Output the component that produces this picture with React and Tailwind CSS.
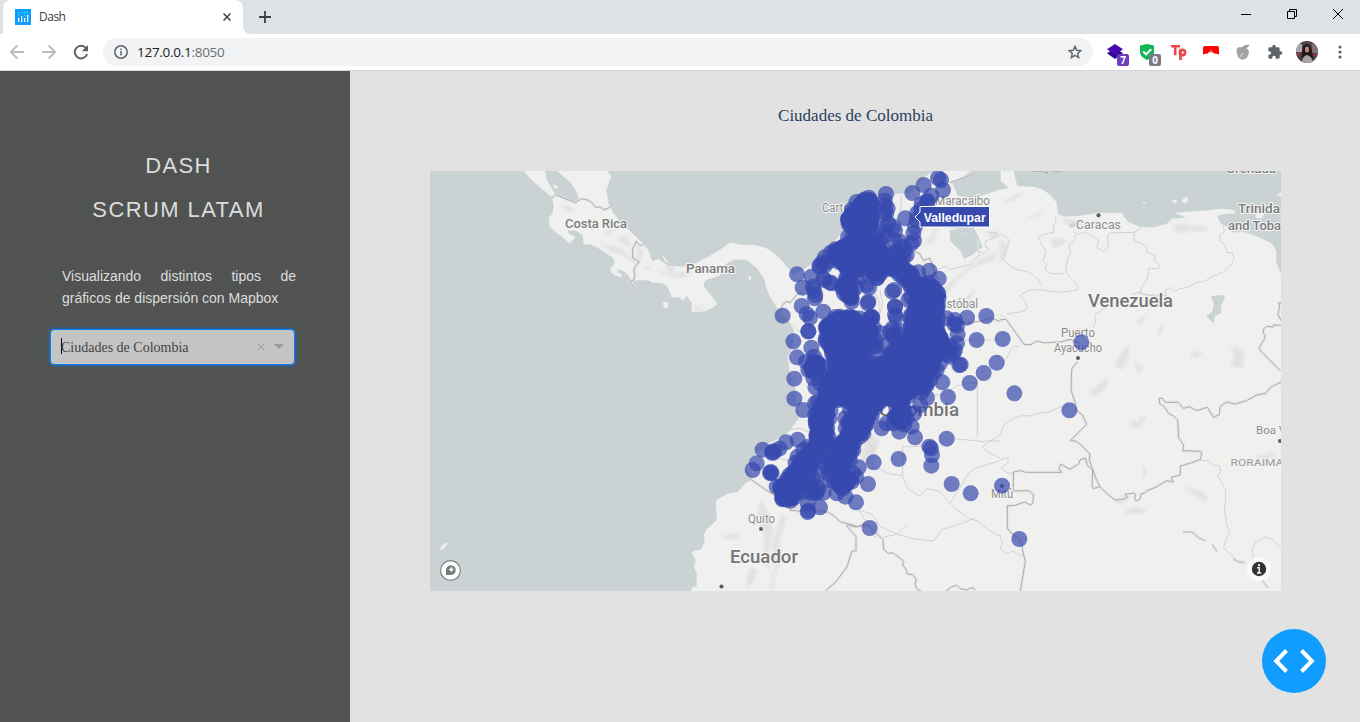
import React from "react";

const LABEL = "Roboto, 'Open Sans', sans-serif";

/* ---------- browser chrome ---------- */

function DashFavicon() {
  return (
    <svg width="16" height="16" viewBox="0 0 16 16" className="shrink-0">
      <rect width="16" height="16" fill="#119dff" />
      <g fill="#fff">
        <rect x="3" y="9" width="1.3" height="4" />
        <rect x="6" y="7" width="1.3" height="6" />
        <rect x="9" y="9" width="1.3" height="4" />
        <rect x="12" y="6" width="1.3" height="7" />
      </g>
      <g fill="#25e8e0">
        <rect x="3" y="6" width="1.3" height="1.3" />
        <rect x="3" y="3" width="1.3" height="1.3" />
        <rect x="6" y="3" width="1.3" height="1.3" />
        <rect x="9" y="3" width="1.3" height="1.3" />
        <rect x="9" y="6" width="1.3" height="1.3" />
        <rect x="12" y="3" width="1.3" height="1.3" />
      </g>
    </svg>
  );
}

function TabStrip() {
  return (
    <div className="flex h-[34px] items-stretch bg-[#dee1e6]">
      <div className="flex w-[3px] items-end" />
      <div className="flex w-[240px] items-center rounded-t-lg bg-white pl-3 pr-[12px]">
        <DashFavicon />
        <span className="ml-2 flex-1 text-[12px] leading-4 tracking-[-0.5px] text-[#3c4043]">Dash</span>
        <svg width="8" height="8" viewBox="0 0 8 8" stroke="#3c4043" strokeWidth="1.5">
          <path d="M.5.5l7 7M7.500.5l-7 7" />
        </svg>
      </div>
      <svg width="8" height="34" viewBox="0 0 8 34" className="shrink-0">
        <path d="M0 26v8h8a8 8 0 0 1-8-8z" fill="#fff" />
      </svg>
      <div className="flex items-center pl-2">
        <svg width="12" height="12" viewBox="0 0 12 12" stroke="#3c4043" strokeWidth="1.8">
          <path d="M6 0v12M0 6h12" />
        </svg>
      </div>
      <div className="ml-auto flex items-start gap-9 pr-[17px] pt-[9px]">
        <svg width="10" height="10" viewBox="0 0 10 10">
          <path d="M0 5.5h10" stroke="#000" />
        </svg>
        <svg width="10" height="10" viewBox="0 0 10 10" fill="none" stroke="#000">
          <path d="M.5 2.5h7v7h-7zM2.5 2.5v-2h7v7h-2" />
        </svg>
        <svg width="10" height="10" viewBox="0 0 10 10" stroke="#000">
          <path d="M0 0l10 10M10 0L0 10" />
        </svg>
      </div>
    </div>
  );
}

function Badge({ className, children }) {
  return (
    <span
      className={
        "absolute left-[10px] top-[10px] flex h-3 w-3 items-center justify-center rounded-[2px] text-[10px] font-bold leading-none text-white " +
        className
      }
    >
      {children}
    </span>
  );
}

function Toolbar() {
  return (
    <div className="flex h-[37px] items-center border-b border-[#d5d6d7] bg-white pl-[9px] pr-[18px]">
      <svg width="16" height="16" viewBox="0 0 16 16" fill="none" stroke="#babcbe" strokeWidth="1.8">
        <path d="M15 8H2M8.3 1.5L1.8 8l6.5 6.5" />
      </svg>
      <svg width="16" height="16" viewBox="0 0 16 16" fill="none" stroke="#babcbe" strokeWidth="1.8" className="ml-4">
        <path d="M1 8h13M7.7 1.5L14.2 8l-6.5 6.5" />
      </svg>
      <svg width="16" height="16" viewBox="0 0 16 16" className="ml-4">
        <path d="M13 4.1A6.3 6.3 0 1 0 14.1 10" fill="none" stroke="#5f6368" strokeWidth="2" />
        <path d="M15 1v6.3H8.7z" fill="#5f6368" />
      </svg>
      <div className="ml-[14px] flex h-7 flex-1 items-center rounded-full bg-[#f1f3f4] pl-[11px] pr-[11px]">
        <svg width="14" height="14" viewBox="0 0 14 14" fill="none" stroke="#5f6368" strokeWidth="1.5">
          <circle cx="7" cy="7" r="6.2" />
          <path d="M7 6v4.5M7 3.4v1.5" />
        </svg>
        <span className="ml-[9px] flex-1 text-[13.5px] leading-4 tracking-[-0.28px] text-[#202124]">
          127.0.0.1<span className="text-[#6b6f73]">:8050</span>
        </span>
        <svg width="14" height="14" viewBox="0 0 24 24" fill="none" stroke="#5f6368" strokeWidth="2.4">
          <path d="M12 2.2l2.9 6.8 7.3.6-5.6 4.8 1.7 7.2L12 17.8l-6.3 3.8 1.7-7.2L1.8 9.6l7.3-.6z" />
        </svg>
      </div>
      <div className="ml-[14px] flex items-center gap-4">
        <div className="relative h-4 w-4">
          <svg width="16" height="16" viewBox="0 0 16 16">
            <path d="M8 4l8 5.2L8 15 0 9.2z" fill="#2b0a8c" />
            <path d="M8 0l8 5.3L8 11 0 5.3z" fill="#4a08b0" />
          </svg>
          <Badge className="bg-[#6f3cc0]">7</Badge>
        </div>
        <div className="relative h-4 w-4">
          <svg width="16" height="16" viewBox="0 0 16 16">
            <path d="M1 1.500l7-1.500 7 1.500v6.500c0 4-4 6.500-7 8-3-1.500-7-4-7-8z" fill="#12b755" />
            <path d="M4.200 7.500l3 2.800 5-5" fill="none" stroke="#fff" strokeWidth="2" />
          </svg>
          <Badge className="bg-[#797a84]">0</Badge>
        </div>
        <svg width="16" height="16" viewBox="0 0 16 16" fill="none" stroke="#ef4747" strokeWidth="2.600">
          <path d="M0 2.300h9M4.200 2.300v9M9.500 5.500V16" />
          <circle cx="11.500" cy="8.500" r="2.600" />
        </svg>
        <svg width="16" height="16" viewBox="0 0 16 16">
          <path d="M2 2h12q2 0 2 2v6.500q-2.500-1-5-1V8.500l-1 .8-1-2-.6 1.700L8 4.500 7.400 9 6.500 7.500 5 9.500q-2.500 0-5 1V4q0-2 2-2z" fill="#fb0606" />
        </svg>
        <svg width="16" height="16" viewBox="0 0 16 16">
          <path d="M7 3.500Q2 1.500 1.500 7q.5 7 5 8.500 5 .5 7-5 1.500-5-2.500-6.500z" fill="#a4a4a4" />
          <path d="M6 4.500q2-3.500 8.500-4Q13.500 5 6 4.500z" fill="#999" />
          <path d="M5 13l3-3.500" stroke="#c6c6c6" strokeWidth="1.600" />
        </svg>
        <svg width="16" height="16" viewBox="0 0 24 24" fill="#5f6368">
          <path d="M20.500 11H19V7a2 2 0 0 0-2-2h-4V3.500a2.500 2.500 0 0 0-5 0V5H4a2 2 0 0 0-2 2v3.800h1.500a2.700 2.700 0 0 1 0 5.400H2V20a2 2 0 0 0 2 2h3.800v-1.500a2.700 2.700 0 0 1 5.400 0V22H17a2 2 0 0 0 2-2v-4h1.500a2.500 2.500 0 0 0 0-5z" />
        </svg>
      </div>
      <svg width="22" height="22" viewBox="0 0 22 22" className="ml-[13px] overflow-hidden rounded-full">
        <rect width="22" height="22" fill="#514247" />
        <path d="M0 3h6v8H0z" fill="#a6a7b2" />
        <path d="M16 3h6v9h-6z" fill="#867078" />
        <path d="M1 11h3v3H1zM17 13h4v2h-4z" fill="#9e3142" />
        <path d="M6 20Q5 5 10 3q6-1 7 15z" fill="#21191e" />
        <ellipse cx="11" cy="8.500" rx="2" ry="3" fill="#c58c76" />
        <path d="M6 22q0-7 5-8 5 1 6 8z" fill="#a7a6a5" />
      </svg>
      <svg width="4" height="14" viewBox="0 0 4 14" fill="#5f6368" className="ml-[20px]">
        <circle cx="2" cy="2" r="1.600" />
        <circle cx="2" cy="7" r="1.600" />
        <circle cx="2" cy="12" r="1.600" />
      </svg>
    </div>
  );
}

/* ---------- sidebar ---------- */

function Sidebar() {
  return (
    <aside className="w-[350px] shrink-0 bg-[#515352] pt-[73px] font-['Liberation_Sans',sans-serif]">
      <div className="pl-[7px] text-center text-[22px] leading-[44px] tracking-[1.400px] text-[#dddddd]">
        <h1>DASH</h1>
        <h1>SCRUM LATAM</h1>
      </div>
      <p className="ml-[62px] mt-[33px] w-[234px] text-justify text-[14px] leading-[22px] text-[#dddddd]">
        Visualizando distintos tipos de gráficos de dispersión con Mapbox
      </p>
      <div className="ml-[50px] mt-5 flex h-[36px] w-[245px] items-center rounded-[4px] border border-[#007eff] bg-[#c4c4c4] pl-[10px] pr-[10px] shadow-[0_0_3px_1px_rgba(0,126,255,0.45)]">
        <span className="-mt-[2px] h-4 w-px bg-black" />
        <span className="-ml-px flex-1 pt-px font-['Liberation_Serif',serif] text-[14px] leading-5 text-[#444444]">
          Ciudades de Colombia
        </span>
        <svg width="8" height="8" viewBox="0 0 8 8" stroke="#999" className="-mt-px mr-[9px]">
          <path d="M.5.5l7 7M7.500.5l-7 7" />
        </svg>
        <svg width="10" height="5" viewBox="0 0 10 5" className="-mt-[2px]">
          <path d="M0 0h10L5 5z" fill="#999" />
        </svg>
      </div>
    </aside>
  );
}

/* ---------- map ---------- */

// Each map tile group is drawn at three units per pixel.
const tile = (x, y) => `translate(${x} ${y}) scale(0.33333)`;

const LAND_NORTH =
  "M606 170L611 176 606 190 608 203 613 213 623 225 637 238 648 250 652 262 658 259 668 266 683 267 697 263 710 256 720 250 730 243 740 245 753 245 762 247 770 250 780 259 787 267 793 276 800 272 806 268 813 263 822 254 830 247 838 238 843 230 845 217 847 207 857 197 868 195 876 200 887 201 897 194 910 194 924 178 935 170 L973 170 952 183 957 195 956 206 952 216 948 228 958 229 960 234 973 232 978 242 978 250 983 247 978 235 967 215 957 196 970 198 982 196 991 193 1000 190 1010 188 1001 181 1001 170 1013 170 1017 186 1026 187 1034 187 1043 190 1050 195 1056 202 1058 215 1065 217 1080 216 1100 213 1122 213 1124 217 1128 222 1140 227 1152 228 1167 224 1172 219 1187 218 1176 213 1187 212 1205 211 1221 209 1233 210 1236 213 1222 214 1217 216 1220 223 1227 227 1233 233 1243 232 1253 235 1260 238 1272 244 1276 251 1276 262 1280 273 1281 273 L1281 591 691 591 693 587 697 587 697 573 694 567 696 560 692 553 694 551 701 550 705 541 704 535 707 529 713 524 717 520 716 501 720 498 728 494 738 492 746 483 753 479 747 468 753 457 770 443 785 436 792 428 800 417 797 405 796 390 790 372 788 357 794 345 794 330 788 320 777 307 770 296 766 286 765 280 757 268 747 260 735 259 727 263 720 269 720 275 712 278 705 280 703 286 709 293 717 304 713 307 705 311 692 312 692 303 686 294 684 300 678 297 672 297 668 287 663 283 652 282 648 280 636 280 631 282 634 288 630 277 624 271 618 269 617 272 622 275 621 277 614 275 610 270 613 266 615 261 612 257 603 251 597 247 590 244 584 244 583 235 575 230 568 230 567 233 575 237 571 242 569 243 562 236 557 233 550 227 549 218 553 213 554 205 552 197 540 187 530 178 523 170z";

const PROVINCES = [
  [1000, 170, "M0 193q28 8 28 22l-9 25-6 18-5 10 11 8 12 13 22 10 29 6 17 9 15 13 9 22M166 135l2 18-8 18 2 16-30 6-18 8 14 28 10 14-8 28 10 12-4 18 18 10h38M230 190l-10 24-14 12 6 18-8 20-6 25 1 22 17 16 16 19 1 13-48 8-28-2-27-5-39-1-32 18 15 13 8 26-16 9-48 7M220 185l14 8 22-7 28 18 11 7-4 23 22 10 13-14-4-31 7-10 74-2 20-13M402 184l1 28 22 8 15 13 1 14 23 10-1 14 18 18-11 7-24-1-3 28-14 23-12 24 54 10M395 375l25-9 13 8 65 3-2-16 18-9 11 13 13-9 27-4 23-14 30-6 14-10 36-15 13-12 14-14 7-14-5-20-15 2-10-28-12-8 1-20 12-7-4-22M322 412l-37 20 2 24-8 16M0 434l16 8M40 530l18-1M0 600l38-70"],
  [720, 170, "M650 300l28-12 12 11 20-6 42-10 10-16 18-12-7-13 20 9 14-15-10-4-2-18 28-10 17-8M480 360l8 40-8 30M700 510h140M540 430l20 12 14-8M290 330l-28 14 8 20-12 26M460 360l20 40-2 40M545 75l-4 48M835 190l-32-4M200 450l45 40M290 515h40"],
  [720, 380, "M772 0v172M450 165l-8 24 20 14-5 60 25 6 30 14 36 3v-85l60-3 20-10M547 287l16 39 36 23 20-24 38 9 33 36 20 18 32 25 34 11 27 25 37 20M690 370l58-93 20-14 24-6 48-15M840 165l-53 34 13 15 40 20M700 177l72 5 14 3 24-3 30 2M480 450l-14 22-50-82 40 12 24 38 60 25 35 11 66 7 26-35 58-18 38-15M205 150l35-5 40 15M150 230l50 10 35-5M475 475l56-12 30-30M620 50l55-8 36-25 60-10"],
  [1000, 380, "M0 168q5-12 10-31l28-21 25-8 32-1 26-8 22-2 25-11 22-7 18-6M0 240l25-8-2 16-20 15 16 13 18 6M595 240l30 3 17 14h16l5 18-10 13 24 42v30l-4 27 8 52 8 20-9 16-10 28 40 38 27 6M843 504l-21-23-26-10-30 15-8 20 2 45M0 463l7 27-6 18 22 13 16-8 18 10 14 8"],
];

const BORDERS = [
  [430, 170, "M366 85l10-12 25 11 35 14 18-12 16 3 15 8 12 15 15-1 9 9 17-7 7-5v-10M640 224l-10 3-12-13-4 14-6 5v30l20 12-12 14-5 13 4 15-4 13-12 5 10 10 4 14"],
  [720, 170, "M180 428l8-24 12-10 10 4 21-24 19-8M690 38l64-22M570 240l28 10 13 22 18-8 12 33 14 33M640 430l100 30 46-8 25-8 29 10"],
  [1000, 170, "M0 450l18-2 54 75 20 1 19-11 22 6 53-4 25-7 28 11M233 575l-17 20-3 35M843 400l-7-2 3 12-5 22 9 20M843 465l-15 1-6-2-3 7-19-2-9 8-1 12 6 7-3 12-17 28 53 55 13 12"],
  [720, 380, "M92 298l45 31 60 39 13 12 1 11 38 3 47-2 30 5 20 14 16 15 15 3 38 11 18-10M380 438l28 31v43l-13 2-14 47-34 45-31 27M378 434l30 7 35-7 36 35 10 10 2 29 14 12 13-2 31 23v16l9 11 4 14 17 2 10 15-4 10 4 16 14 9M678 633l14-11 18-6 12 10 17 4 20-8 6 9"],
  [1000, 380, "M215 0L213 32 219 47 232 94 245 103 252 115 260 133 211 182 230 184 244 196 270 222 268 240 276 262 288 296 300 320 280 326 276 318 278 270 262 256 256 234 240 240 236 252 210 268 182 252 177 266 185 277 77 277 64 272 40 276V333L88 332 100 344 99 370 91 375 75 366 54 373 41 377H22V445L34 459 64 485 68 513 76 543 61 634M300 320L322 342 345 360 368 358 382 352 376 343 401 339 407 343 404 355 409 363 420 357 424 341 434 340 441 332 469 321 478 315 501 302 520 306 514 292 541 285V258L553 255 575 248 601 238 605 218 600 214 548 212 551 195 536 173 533 120 521 108 506 101 492 79 479 71 477 56 486 54 497 67H534L550 85 569 80 590 92 622 82 640 112 658 104 660 80 680 66 704 72 740 62 770 45 798 40 812 22 843 6"],
];

const RELIEF = [
  [430, 170, "M385 105l35 4 18 16-22 2zM500 217l38 10 30 5 30 28 30 14-14 6-45-28-28-8zM520 190l25-15 5 16-17 5zM640 290l25-3-4 12-22-1zM670 300l60 10 40-6 20 10-45 10-40-8zM620 230l20 12-8 30-12-12zM560 205l28-8 18 24-20 10zM790 405l15 10 16-12-8 20h-20zM700 288l35 2-10 20z"],
  [720, 170, "M660 360l75-60 40-30 65-26-22 28-60 20-50 40-30 46zM800 190l30-10 8 20-20 8zM608 230l20-26 30-50-15 60zM710 410l40-40 20-10-30 44zM575 100l10 50-20 20z"],
  [1000, 170, "M0 210l20 10v35l-20 25zM15 90l40-20 18-4-22 20-44 14zM70 150l60-30-8 14-50 20zM515 180l20-20 52 8 44 2-20 14-40-2-24 8zM190 145l60 10-5 12-50-4zM150 210l40-8 6 16-30 20zM690 537l24-8 20 20-5 25 4 15-30 5-12-18 15-20zM345 590l16-40 30-30-9 50-18 30zM570 550l38-10-8 18-20 8zM470 485l20-28-4 30-10 8zM410 450l32-18-20 32zM400 570l30 20-16 20z"],
  [720, 380, "M120 360l30 40 8 60-12 70 6 50-20-30 2-80-24-60zM185 400l14 20-22 60 10 60-22 40-5 45-14 10 20-80-10-60zM0 470l40-10 30 6-40 14zM205 355l60-10 30 30-40 20-42-8zM440 150l40 30-20 60-25 40-10-50zM90 560l24 10-14 40-26 20z"],
  [1000, 380, "M265 30l25-10 17-20 18-2-8 30-30 20-16-8zM390 120l24 6 16-26 8 14-20 28-20 2zM345 362l25-16 20 2-14 20-12 8zM370 390l42-10 30 10-20 11h-40zM550 320l50 10 28 24-16 8-30-14zM760 230l60-15 15 12-50 12zM430 250l12 30-16 20z"],
];

// The area where municipalities overlap into one solid mass.
const CORE =
  "M345 85L375 74 405 78 414 110 414 150 408 195 430 225 470 250 515 290 545 325 590 341 611 370 611 420 605 460 618 510 610 560 590 600 565 628 545 660 507 697 505 755 480 775 455 747 455 705 438 700 400 740 390 775 362 810 335 870 310 908 270 908 253 880 285 820 320 770 345 740 320 705 285 710 280 760 278 805 250 865 215 915 190 965 165 1005 140 1009 108 988 108 940 145 895 185 855 210 810 214 740 232 690 247 640 267 590 257 530 248 460 285 428 340 421 370 440 390 480 388 530 390 570 430 555 460 520 495 490 500 430 515 380 490 340 460 315 425 295 380 285 350 305 300 302 280 260 285 225 325 205 335 185 308 165 305 140z";

// [x, y] of separately visible markers.
const DOTS = [
  [594,24],[603,30],[609,60],[551,45],[517,69],[574,77],[561,92],[563,96],[545,102],[543,118],[531,130],[530,150],[525,170],[520,190],[522,212],[515,220],[495,145],[438,72],[434,92],[436,108],[443,115],[432,135],[439,130],[445,160],[465,182],[436,183],[460,170],[438,195],[421,178],[420,215],[463,211],[485,230],[495,240],[480,215],[470,245],[500,255],[490,262],[370,93],[360,110],[340,125],[325,145],[324,201],[310,230],[335,205],[305,245],[286,238],[272,248],[255,262],[238,288],[246,278],[240,290],[263,275],[256,285],[171,313],[214,320],[188,353],[219,350],[226,375],[225,385],[222,362],[250,325],[253,330],[270,338],[275,340],[330,295],[320,330],[327,345],[333,360],[312,370],[335,385],[335,395],[380,345],[387,353],[405,310],[410,325],[407,290],[385,395],[383,400],[363,320],[395,440],[397,444],[457,365],[463,360],[465,410],[465,410],[465,435],[468,442],[458,475],[450,485],[460,500],[422,490],[405,510],[403,538],[409,528],[392,500],[440,525],[513,380],[505,390],[497,330],[535,307],[568,302],[596,326],[515,310],[128,437],[185,408],[200,432],[210,443],[250,425],[205,484],[205,484],[160,514],[214,533],[171,562],[198,575],[163,626],[163,686],[190,720],[222,560],[226,580],[225,590],[228,600],[226,610],[222,600],[220,625],[205,600],[240,585],[226,652],[240,640],[620,445],[645,450],[643,462],[651,467],[681,443],[739,438],[653,493],[651,520],[640,550],[630,560],[645,540],[658,585],[662,584],[710,510],[788,507],[770,578],[731,609],[689,639],[624,681],[607,637],[590,600],[580,610],[610,550],[600,580],[561,684],[550,655],[541,705],[523,730],[515,770],[525,802],[478,785],[460,760],[480,757],[425,775],[440,760],[500,745],[568,830],[573,835],[576,855],[574,887],[620,806],[476,867],[401,877],[384,942],[348,997],[356,892],[389,1074],[635,942],[692,970],[786,947],[823,670],[1024,517],[988,721],[838,1107],
  [173,809],[138,817],[68,839],[96,846],[104,843],[98,849],[118,836],[50,880],[38,900],[92,906],[95,910],[90,909],[173,860],[190,840],[205,830],[185,870],[110,950],[128,985],[142,982],[150,984],[205,920],[220,925],[232,950],[230,970],[251,968],[236,912],[203,1000],[205,1022],[203,1026],[240,1012],[226,965],[270,930],[282,935],[300,950],[290,970],[316,980],[318,945],[340,910],[348,920],[335,935],[315,925],[260,890],[265,910],[315,745],[317,775],[325,790],[330,720],[360,800],[370,790],[375,755],[340,840],[300,820],[310,890],[330,870],[405,715],[395,740],[225,700],[225,735],[228,765],[230,800],[275,460],[275,540],[300,440],[380,460],[385,480],[375,540],[260,640],[265,620],[570,630],[600,500],[610,530],
];

// [x, y, rx, ry, count] of places where markers crowd but stay translucent.
const CLUSTERS = [
  [335, 145, 12, 30, 10],
  [310, 255, 32, 25, 22],
  [375, 225, 45, 25, 18],
  [370, 280, 60, 22, 14],
  [335, 340, 32, 35, 9],
  [410, 310, 20, 20, 8],
  [455, 275, 35, 30, 12],
  [330, 385, 12, 22, 6],
  [226, 595, 14, 22, 12],
  [390, 490, 18, 50, 9],
  [540, 345, 30, 14, 8],
  [610, 530, 20, 40, 10],
  [482, 735, 24, 25, 10],
  [350, 735, 35, 40, 14],
  [190, 885, 30, 26, 10],
  [310, 935, 30, 22, 9],
  [215, 960, 28, 14, 5],
  [263, 490, 8, 50, 7],
  [235, 740, 10, 60, 7],
  [545, 645, 20, 24, 5],
  [470, 490, 18, 14, 3],
  [305, 850, 25, 36, 10],
];

function seeded(seed) {
  let s = seed;
  return () => {
    s = (s * 16807) % 2147483647;
    return s / 2147483647;
  };
}

// Scatter along the rim of the core, which gives it a lobed edge.
function rimDots() {
  const nums = CORE.match(/\d+/g).map(Number);
  const rnd = seeded(7);
  const out = [];
  for (let i = 0; i + 3 < nums.length; i += 2) {
    const [x1, y1, x2, y2] = nums.slice(i, i + 4);
    const len = Math.hypot(x2 - x1, y2 - y1) || 1;
    const n = Math.max(2, Math.round(len / 13));
    for (let k = 0; k < n; k++) {
      const t = k / n;
      // Shift towards the inside, which lies to the right of a clockwise outline.
      const d = 17 + (rnd() - 0.5) * 10;
      out.push([
        x1 + (x2 - x1) * t - ((y2 - y1) / len) * d,
        y1 + (y2 - y1) * t + ((x2 - x1) / len) * d,
      ]);
    }
  }
  return out;
}

function clusterDots() {
  const rnd = seeded(91);
  return CLUSTERS.flatMap(([x, y, rx, ry, n]) =>
    Array.from({ length: n }, () => {
      const a = rnd() * Math.PI * 2;
      const r = Math.sqrt(rnd());
      return [x + Math.cos(a) * r * rx, y + Math.sin(a) * r * ry];
    })
  );
}

const MARKERS = rimDots().concat(clusterDots(), DOTS);

const PLACES = [
  ["Costa Rica", 565, 228, 62, 13, 500, "#7b7b7b"],
  ["Panama", 686, 273, 49, 13, 500, "#7b7b7b"],
  ["Venezuela", 1088, 307, 85, 18.5, 500, "#747474"],
  ["Colombia", 879, 416, 80, 18.5, 500, "#747474"],
  ["Ecuador", 730, 563, 68, 18.5, 500, "#747474"],
  ["Trinida", 1238, 213, 42, 13, 500, "#7b7b7b"],
  ["and Toba", 1228, 230, 53, 13, 500, "#7b7b7b"],
  ["Grenada", 1226, 173, 50, 13, 500, "#7b7b7b"],
  ["Cartagena", 822, 212, 52, 12, 400, "#8c8c8c"],
  ["Maracaibo", 935, 205, 55, 12, 400, "#8c8c8c"],
  ["San Cristóbal", 910, 308, 68, 12, 400, "#8c8c8c"],
  ["Caracas", 1076, 229, 45, 12, 400, "#8c8c8c"],
  ["Puerto", 1061, 337, 34, 12, 400, "#8c8c8c"],
  ["Ayacucho", 1054, 352, 48, 12, 400, "#8c8c8c"],
  ["Mitú", 991, 498, 22, 12, 400, "#8c8c8c"],
  ["Quito", 748, 523, 27, 12, 400, "#8c8c8c"],
  ["Pasto", 780, 501, 32, 12, 400, "#8c8c8c"],
  ["Boa V", 1256, 434, 30, 11.5, 400, "#8c8c8c"],
  ["RORAIMA", 1230.5, 466, 53, 9.5, 500, "#a6a6a6"],
];

function ColombiaMap() {
  return (
    <svg viewBox="430 171 851 420" className="block h-[420px] w-[851px]">
      <defs>
        <filter id="soft" x="-20%" y="-20%" width="140%" height="140%">
          <feGaussianBlur stdDeviation="5" />
        </filter>
      </defs>
      <rect x="430" y="171" width="851" height="420" fill="#cad2d3" />
      <g fill="#f0f0ef" stroke="#f3f4f4" strokeWidth="0.5">
        <path d={LAND_NORTH} />
        <path d="M665 302l3 1-1 5-3-1-1-4zM440 549l3-4 5-2-3 4-4 3zM1172 201l3-1 2 1-2 2zM1182 200l5-3 1 4-4 2zM1143 202l3 1h-3zM1256 214h8l-2 4h-6zM748 276l3 1-1 3zM663 256l6 7-4-2zM1277 195l4-2v3z" />
      </g>
      <g fill="#cad2d3">
        <path d="M545 170l2 10 8 14 6 4 14 4 4-4-3-7-4-7-9-8-7-6z" />
        <path d="M950 230l10-1 3 5 10-3 4 8 1 11-6 5-8 4-4-9-5-4-5-6z" />
        <path d="M1211 296l14-1-1 5-3 6v7l-6 3-1 7-4-3-4-4 6-4 2-8-2-5zM1069 224l6-1 3 3-8 2z" />
      </g>
      <path d="M553 184l2 1 3 2-2 2-2-1z" fill="#f0f0ef" />
      {RELIEF.map(([x, y, d]) => (
        <path key={"r" + x + y} transform={tile(x, y)} d={d} fill="#d8d9d8" opacity="0.6" filter="url(#soft)" />
      ))}
      <g fill="none" strokeLinejoin="round">
        {PROVINCES.map(([x, y, d]) => (
          <path key={"p" + x + y} transform={tile(x, y)} d={d} stroke="#d2d2d2" strokeWidth="3" />
        ))}
        {BORDERS.map(([x, y, d]) => (
          <g key={"b" + x + y} transform={tile(x, y)}>
            <path d={d} stroke="#e2e2e2" strokeWidth="9" opacity="0.7" />
            <path d={d} stroke="#acacac" strokeWidth="3" />
          </g>
        ))}
        <path d="M1183 532h9l7 6 7 3M1212 544l5 8M1233 559l6 3 5 1M1262 580l6 8" stroke="#c9d0d2" strokeWidth="2" />
      </g>
      <g fill="#5c5c5c">
        <circle cx="1098.500" cy="215.300" r="2.100" />
        <circle cx="1078" cy="358" r="2" />
        <circle cx="1280" cy="441" r="2" />
        <circle cx="761" cy="529" r="1.900" />
        <circle cx="721.500" cy="586.500" r="2.100" />
        <circle cx="1002" cy="486" r="2" />
        <circle cx="944" cy="296" r="2" />
      </g>
      <g fontFamily={LABEL} stroke="#f5f5f5" strokeWidth="2" strokeLinejoin="round" paintOrder="stroke">
        <path d="M1033 171h10M1045 171q0 2.500 3 2M1052 171h9" stroke="#9a9a9a" strokeWidth="1" fill="none" />
        {PLACES.map(([name, x, y, w, size, weight, color]) => (
          <text key={name} x={x} y={y} fontSize={size} fontWeight={weight} fill={color} textLength={w} lengthAdjust="spacingAndGlyphs">
            {name}
          </text>
        ))}
      </g>
      <g transform={tile(740, 170)} fill="#3649ae">
        {MARKERS.map(([x, y], i) => (
          <circle key={i} cx={x} cy={y} r="24" opacity="0.7" />
        ))}
        <path d={CORE} />
      </g>
      <path d="M915 217l5-5v-5.500h69.500v20.500H920v-5z" fill="#3649ae" stroke="#fff" />
      <text x="923.700" y="222" fontSize="13" fontWeight="700" fontFamily="'Liberation Sans', sans-serif" fill="#fff" textLength="62" lengthAdjust="spacingAndGlyphs">
        Valledupar
      </text>
      <g>
        <circle cx="450.500" cy="570.500" r="9.900" fill="#fff" stroke="#7f8585" strokeWidth="1.200" />
        <path d="M446 575v-5.200a4.900 4.900 0 1 1 5.200 5.200z" fill="#747b7b" />
        <path d="M451.300 566.600l.9 2 2 .9-2 .9-.9 2-.9-2-2-.9 2-.9z" fill="#fff" />
      </g>
      <g>
        <circle cx="1259" cy="569" r="12" fill="#fff" opacity="0.65" />
        <circle cx="1259" cy="569" r="7.200" fill="#333" />
        <path d="M1257.200 567.800h2v4.500M1257 573h4.200" stroke="#fff" strokeWidth="1.400" fill="none" />
        <circle cx="1259" cy="565.200" r="1.100" fill="#fff" />
      </g>
    </svg>
  );
}

export default function App() {
  return (
    <div className="flex h-[722px] w-[1360px] flex-col overflow-hidden bg-[#e2e2e2] font-['Open_Sans',sans-serif]">
      <TabStrip />
      <Toolbar />
      <div className="flex min-h-0 flex-1">
        <Sidebar />
        <main className="flex flex-1 flex-col items-start pl-20">
          <h2 className="mt-[33px] w-[851px] text-center font-['Liberation_Serif',serif] text-[17px] leading-6 text-[#2a3f5f]">
            Ciudades de Colombia
          </h2>
          <div className="mt-[43px]">
            <ColombiaMap />
          </div>
          <button className="mr-[34px] mt-[38px] flex h-16 w-16 shrink-0 items-center justify-center self-end rounded-full bg-[#119dff]">
            <svg width="42" height="24" viewBox="0 0 42 24" fill="none" stroke="#fff" strokeWidth="4">
              <path d="M13.500 1.500L3.200 12l10.300 10.500M28.500 1.500L38.800 12 28.500 22.500" />
            </svg>
          </button>
        </main>
      </div>
    </div>
  );
}
